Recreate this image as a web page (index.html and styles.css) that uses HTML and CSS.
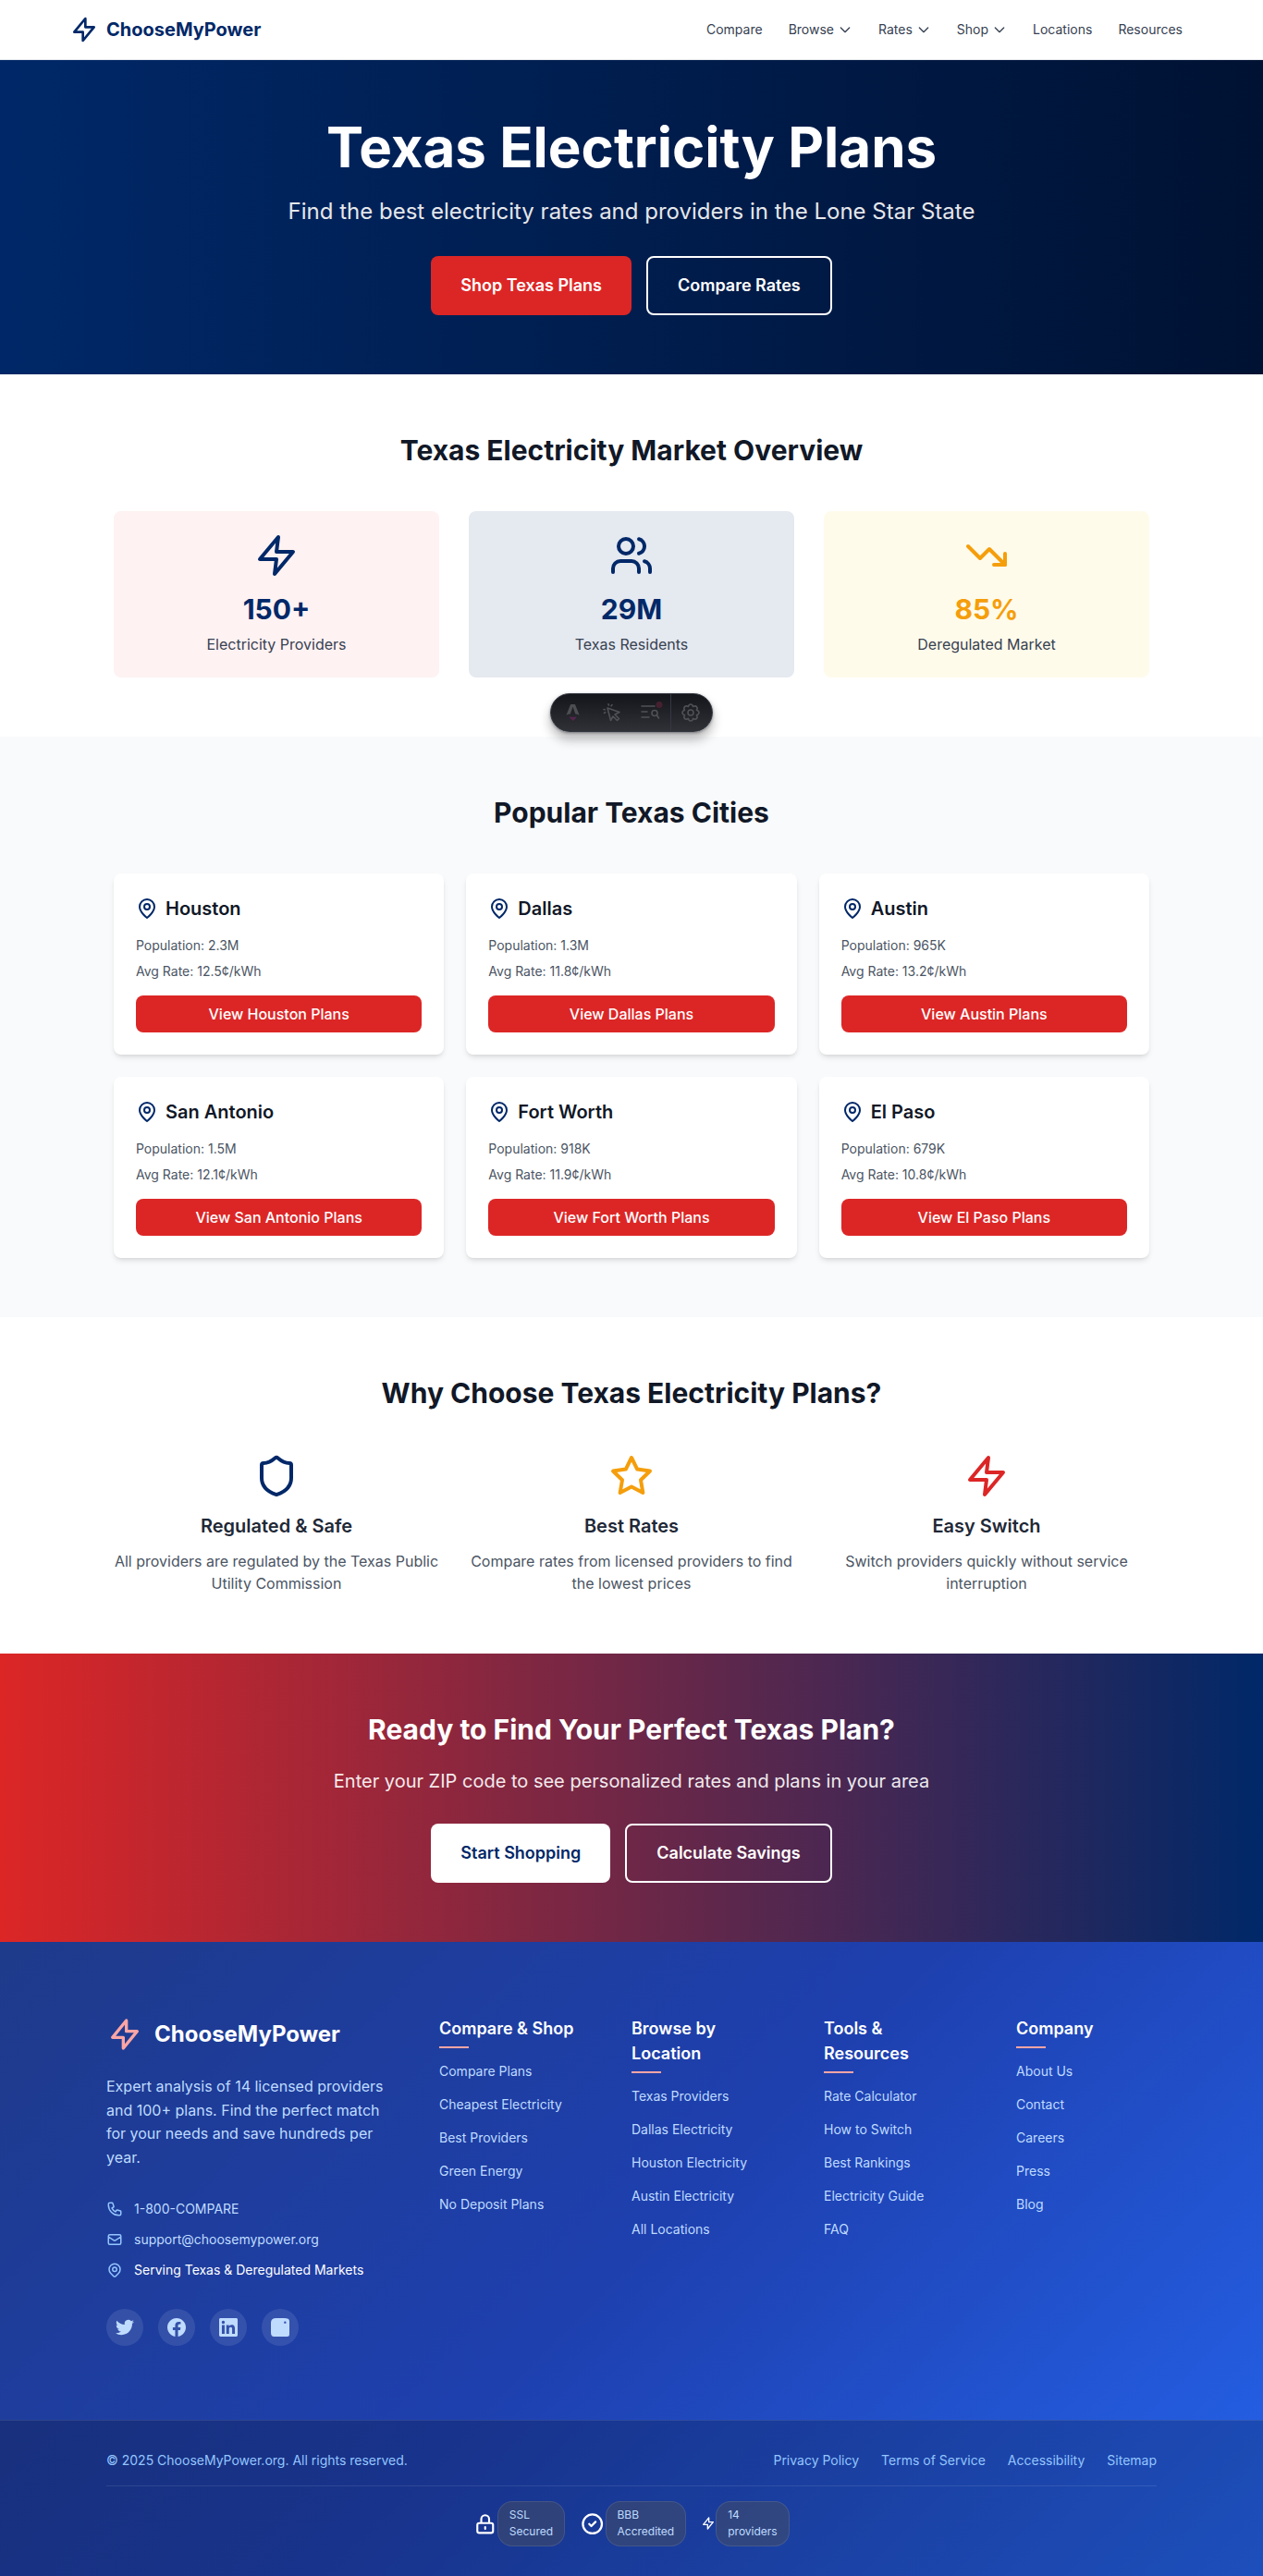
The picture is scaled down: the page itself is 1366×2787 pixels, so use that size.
FILE: index.html
```html
<!DOCTYPE html>
<html lang="en">
<head>
<meta charset="utf-8">
<title>Texas Electricity Plans | ChooseMyPower</title>
<link rel="stylesheet" href="styles.css">
</head>
<body>
<svg class="sprite" aria-hidden="true">
  <symbol id="bolt" viewBox="0 0 24 24"><path d="M13 10V3L4 14h7v7l9-11h-7z"/></symbol>
  <symbol id="zap" viewBox="0 0 24 24"><path d="M13 2L3 14h9l-1 8 10-12h-9l1-8z"/></symbol>
  <symbol id="chevron" viewBox="0 0 24 24"><path d="M19 9l-7 7-7-7"/></symbol>
  <symbol id="pin" viewBox="0 0 24 24"><path d="M17.657 16.657L13.414 20.9a1.998 1.998 0 01-2.827 0l-4.244-4.243a8 8 0 1111.314 0z"/><path d="M15 11a3 3 0 11-6 0 3 3 0 016 0z"/></symbol>
  <symbol id="map-pin" viewBox="0 0 24 24"><path d="M20 10c0 6-8 12-8 12s-8-6-8-12a8 8 0 0 1 16 0Z"/><circle cx="12" cy="10" r="3"/></symbol>
</svg>

<header class="header">
  <div class="header-inner">
    <a class="logo"><svg class="icon icon-32"><use href="#bolt"/></svg><span>ChooseMyPower</span></a>
    <nav class="nav">
      <a class="nav-link">Compare</a>
      <a class="nav-link">Browse<svg class="icon icon-16"><use href="#chevron"/></svg></a>
      <a class="nav-link">Rates<svg class="icon icon-16"><use href="#chevron"/></svg></a>
      <a class="nav-link">Shop<svg class="icon icon-16"><use href="#chevron"/></svg></a>
      <a class="nav-link">Locations</a>
      <a class="nav-link">Resources</a>
    </nav>
  </div>
</header>

<main>
  <section class="hero">
    <h1 class="hero-title">Texas Electricity Plans</h1>
    <p class="hero-text">Find the best electricity rates and providers in the Lone Star State</p>
    <div class="actions">
      <a class="button button-red">Shop Texas Plans</a>
      <a class="button button-outline">Compare Rates</a>
    </div>
  </section>

  <section class="section">
    <h2 class="heading">Texas Electricity Market Overview</h2>
    <div class="grid stats">
      <div class="stat stat-red">
        <svg class="icon icon-48"><use href="#zap"/></svg>
        <div class="stat-value">150+</div>
        <div class="stat-label">Electricity Providers</div>
      </div>
      <div class="stat stat-blue">
        <svg class="icon icon-48" viewBox="0 0 24 24"><path d="M16 21v-2a4 4 0 0 0-4-4H6a4 4 0 0 0-4 4v2"/><circle cx="9" cy="7" r="4"/><path d="M22 21v-2a4 4 0 0 0-3-3.87"/><path d="M16 3.13a4 4 0 0 1 0 7.75"/></svg>
        <div class="stat-value">29M</div>
        <div class="stat-label">Texas Residents</div>
      </div>
      <div class="stat stat-yellow">
        <svg class="icon icon-48" viewBox="0 0 24 24"><path d="M22 17l-8.500-8.500-5 5L2 7"/><path d="M16 17h6v-6"/></svg>
        <div class="stat-value">85%</div>
        <div class="stat-label">Deregulated Market</div>
      </div>
    </div>
  </section>

  <section class="section section-gray">
    <h2 class="heading">Popular Texas Cities</h2>
    <div class="grid cities">
      <article class="city">
        <h3 class="city-name"><svg class="icon icon-24"><use href="#map-pin"/></svg>Houston</h3>
        <p class="city-fact">Population: 2.3M</p><p class="city-fact">Avg Rate: 12.5¢/kWh</p>
        <a class="city-button">View Houston Plans</a>
      </article>
      <article class="city">
        <h3 class="city-name"><svg class="icon icon-24"><use href="#map-pin"/></svg>Dallas</h3>
        <p class="city-fact">Population: 1.3M</p><p class="city-fact">Avg Rate: 11.8¢/kWh</p>
        <a class="city-button">View Dallas Plans</a>
      </article>
      <article class="city">
        <h3 class="city-name"><svg class="icon icon-24"><use href="#map-pin"/></svg>Austin</h3>
        <p class="city-fact">Population: 965K</p><p class="city-fact">Avg Rate: 13.2¢/kWh</p>
        <a class="city-button">View Austin Plans</a>
      </article>
      <article class="city">
        <h3 class="city-name"><svg class="icon icon-24"><use href="#map-pin"/></svg>San Antonio</h3>
        <p class="city-fact">Population: 1.5M</p><p class="city-fact">Avg Rate: 12.1¢/kWh</p>
        <a class="city-button">View San Antonio Plans</a>
      </article>
      <article class="city">
        <h3 class="city-name"><svg class="icon icon-24"><use href="#map-pin"/></svg>Fort Worth</h3>
        <p class="city-fact">Population: 918K</p><p class="city-fact">Avg Rate: 11.9¢/kWh</p>
        <a class="city-button">View Fort Worth Plans</a>
      </article>
      <article class="city">
        <h3 class="city-name"><svg class="icon icon-24"><use href="#map-pin"/></svg>El Paso</h3>
        <p class="city-fact">Population: 679K</p><p class="city-fact">Avg Rate: 10.8¢/kWh</p>
        <a class="city-button">View El Paso Plans</a>
      </article>
    </div>
  </section>

  <section class="section">
    <h2 class="heading">Why Choose Texas Electricity Plans?</h2>
    <div class="grid reasons">
      <div class="reason reason-navy">
        <svg class="icon icon-48" viewBox="0 0 24 24"><path d="M20 13c0 5-3.500 7.500-7.660 8.950a1 1 0 0 1-.67-.01C7.500 20.500 4 18 4 13V6a1 1 0 0 1 1-1c2 0 4.500-1.200 6.240-2.720a1.170 1.170 0 0 1 1.520 0C14.510 3.810 17 5 19 5a1 1 0 0 1 1 1z"/></svg>
        <h3 class="reason-title">Regulated &amp; Safe</h3>
        <p class="reason-text">All providers are regulated by the Texas Public Utility Commission</p>
      </div>
      <div class="reason reason-gold">
        <svg class="icon icon-48" viewBox="0 0 24 24"><path d="M12 2l3.090 6.260L22 9.270l-5 4.870 1.180 6.880L12 17.770l-6.180 3.250L7 14.140 2 9.270l6.910-1.010L12 2z"/></svg>
        <h3 class="reason-title">Best Rates</h3>
        <p class="reason-text">Compare rates from licensed providers to find the lowest prices</p>
      </div>
      <div class="reason reason-red">
        <svg class="icon icon-48"><use href="#zap"/></svg>
        <h3 class="reason-title">Easy Switch</h3>
        <p class="reason-text">Switch providers quickly without service interruption</p>
      </div>
    </div>
  </section>

  <section class="cta">
    <h2 class="cta-title">Ready to Find Your Perfect Texas Plan?</h2>
    <p class="cta-text">Enter your ZIP code to see personalized rates and plans in your area</p>
    <div class="actions">
      <a class="button button-white">Start Shopping</a>
      <a class="button button-outline">Calculate Savings</a>
    </div>
  </section>
</main>

<footer class="footer">
  <div class="footer-main">
    <div>
      <div class="footer-brand"><svg class="icon icon-40"><use href="#bolt"/></svg><span>ChooseMyPower</span></div>
      <p class="footer-about">Expert analysis of 14 licensed providers and 100+ plans. Find the perfect match for your needs and save hundreds per year.</p>
      <ul class="contacts">
        <li><svg class="icon icon-18" viewBox="0 0 24 24"><path d="M3 5a2 2 0 012-2h3.280a1 1 0 01.948.684l1.498 4.493a1 1 0 01-.502 1.210l-2.257 1.130a11.042 11.042 0 005.516 5.516l1.130-2.257a1 1 0 011.210-.502l4.493 1.498a1 1 0 01.684.949V19a2 2 0 01-2 2h-1C9.716 21 3 14.284 3 6V5z"/></svg>1-800-COMPARE</li>
        <li><svg class="icon icon-18" viewBox="0 0 24 24"><path d="M3 8l7.890 5.260a2 2 0 002.220 0L21 8M5 19h14a2 2 0 002-2V7a2 2 0 00-2-2H5a2 2 0 00-2 2v10a2 2 0 002 2z"/></svg>support@choosemypower.org</li>
        <li class="contact-area"><svg class="icon icon-18"><use href="#pin"/></svg>Serving Texas &amp; Deregulated Markets</li>
      </ul>
      <div class="socials">
        <a class="social"><svg viewBox="0 0 24 24"><path d="M23.953 4.570a10 10 0 01-2.825.775 4.958 4.958 0 002.163-2.723c-.951.555-2.005.959-3.127 1.184a4.920 4.920 0 00-8.384 4.482C7.690 8.095 4.067 6.130 1.640 3.162a4.822 4.822 0 00-.666 2.475c0 1.710.87 3.213 2.188 4.096a4.904 4.904 0 01-2.228-.616v.060a4.923 4.923 0 003.946 4.827 4.996 4.996 0 01-2.212.085 4.936 4.936 0 004.604 3.417 9.867 9.867 0 01-6.102 2.105c-.39 0-.779-.023-1.170-.067a13.995 13.995 0 007.557 2.209c9.053 0 13.998-7.496 13.998-13.985 0-.21 0-.42-.015-.63A9.935 9.935 0 0024 4.590z"/></svg></a>
        <a class="social"><svg viewBox="0 0 24 24"><path d="M24 12.073c0-6.627-5.373-12-12-12s-12 5.373-12 12c0 5.990 4.388 10.954 10.125 11.854v-8.385H7.078v-3.470h3.047V9.430c0-3.007 1.792-4.669 4.533-4.669 1.312 0 2.686.235 2.686.235v2.953H15.830c-1.491 0-1.956.925-1.956 1.874v2.250h3.328l-.532 3.470h-2.796v8.385C19.612 23.027 24 18.062 24 12.073z"/></svg></a>
        <a class="social"><svg viewBox="0 0 24 24"><path d="M20.447 20.452h-3.554v-5.569c0-1.328-.027-3.037-1.852-3.037-1.853 0-2.136 1.445-2.136 2.939v5.667H9.351V9h3.414v1.561h.046c.477-.9 1.637-1.850 3.370-1.850 3.601 0 4.267 2.370 4.267 5.455v6.286zM5.337 7.433a2.062 2.062 0 01-2.063-2.065 2.064 2.064 0 112.063 2.065zm1.782 13.019H3.555V9h3.564v11.452zM22.225 0H1.771C.792 0 0 .774 0 1.729v20.542C0 23.227.792 24 1.771 24h20.451C23.200 24 24 23.227 24 22.271V1.729C24 .774 23.200 0 22.222 0h.003z"/></svg></a>
        <a class="social"><svg viewBox="0 0 24 24"><path fill-rule="evenodd" d="M7 0h10q7 0 7 4v17q0 3-3 3H4q-4 0-4-5V6q0-6 7-6zm11.400 4.150a1.440 1.440 0 100 2.880 1.440 1.440 0 000-2.880z"/></svg></a>
      </div>
    </div>
    <div>
      <h4 class="footer-title">Compare &amp; Shop</h4>
      <ul class="footer-links"><li>Compare Plans</li><li>Cheapest Electricity</li><li>Best Providers</li><li>Green Energy</li><li>No Deposit Plans</li></ul>
    </div>
    <div>
      <h4 class="footer-title">Browse by Location</h4>
      <ul class="footer-links"><li>Texas Providers</li><li>Dallas Electricity</li><li>Houston Electricity</li><li>Austin Electricity</li><li>All Locations</li></ul>
    </div>
    <div>
      <h4 class="footer-title">Tools &amp; Resources</h4>
      <ul class="footer-links"><li>Rate Calculator</li><li>How to Switch</li><li>Best Rankings</li><li>Electricity Guide</li><li>FAQ</li></ul>
    </div>
    <div>
      <h4 class="footer-title">Company</h4>
      <ul class="footer-links"><li>About Us</li><li>Contact</li><li>Careers</li><li>Press</li><li>Blog</li></ul>
    </div>
  </div>
  <div class="footer-bottom">
    <div class="footer-bottom-inner">
      <div class="legal">
        <span>© 2025 ChooseMyPower.org. All rights reserved.</span>
        <div class="legal-links"><a>Privacy Policy</a><a>Terms of Service</a><a>Accessibility</a><a>Sitemap</a></div>
      </div>
      <div class="trust">
        <div class="trust-item"><svg class="icon trust-lock" viewBox="0 0 24 24"><path d="M12 15v2m-6 4h12a2 2 0 002-2v-6a2 2 0 00-2-2H6a2 2 0 00-2 2v6a2 2 0 002 2zm10-10V7a4 4 0 00-8 0v4h8z"/></svg><span class="badge">SSL<br>Secured</span></div>
        <div class="trust-item"><svg class="icon trust-check" viewBox="0 0 24 24"><path d="M9 12l2 2 4-4m6 2a9 9 0 11-18 0 9 9 0 0118 0z"/></svg><span class="badge">BBB<br>Accredited</span></div>
        <div class="trust-item"><svg class="icon icon-16"><use href="#bolt"/></svg><span class="badge">14<br>providers</span></div>
      </div>
    </div>
  </div>
</footer>

<div class="toolbar">
  <span class="tool"><svg width="16" height="20" viewBox="0 0 18 20"><path fill="#4d4e52" d="M5.800 0h5.400l5.300 13q-2.600-1.100-4.900-1.200L8.500 3 5.400 11.800Q3 11.900.5 13z"/><path fill="#56264f" d="M4 14.800q4.500 1.200 9 0-.2 2.500-3 4l-1.500 1.500q-.3-1.800-1.800-2.200Q4.500 17 4 14.800z"/></svg></span>
  <span class="tool"><svg class="icon" width="20" height="20" viewBox="0 0 20 20"><path d="M5 5l13 4.500-5 2.500 4.500 4.500-2 2L11 14l-2.500 4.500zM6 .8l.4 1.200M10 1.500l-1 1.200M1 6.500l1.200.3M1.500 10.500l1.200-.8"/></svg></span>
  <span class="tool"><svg class="icon" width="24" height="20" viewBox="0 0 24 20"><path d="M2 3h14M2 9h6M2 15h8"/><circle cx="16" cy="10.500" r="3"/><path d="M18.500 13l2 3"/><circle class="tool-dot" cx="21" cy="1.500" r="3.500"/></svg></span>
  <span class="tool tool-last"><svg class="icon" width="20" height="20" viewBox="0 0 20 20"><circle cx="10" cy="10" r="3"/><path d="M8 2q2-2 4 0l.5 1.500 2-.8q2.500.3 2.700 2.900l-.8 1.600L18 8q2 2 0 4l-1.600.7.8 1.700q-.2 2.500-2.700 2.800l-2-.8L12 18q-2 2-4 0l-.6-1.600-2 .8q-2.400-.3-2.700-2.800l.8-1.700L2 12q-2-2 0-4l1.500-.8-.8-1.600q.3-2.600 2.700-2.900l2 .8z"/></svg></span>
</div>
</body>
</html>
```
FILE: styles.css
```css
*, *::before, *::after { box-sizing: border-box; margin: 0; padding: 0; }
body { position: relative; font-family: Inter, "Liberation Sans", sans-serif; font-size: 16px; line-height: 24px; color: #111827; background: #fff; }
ul { list-style: none; }
.sprite { display: none; }

.icon { flex: none; fill: none; stroke: currentColor; stroke-width: 2; stroke-linecap: round; stroke-linejoin: round; overflow: visible; }
.icon-16 { width: 16px; height: 16px; }
.icon-18 { width: 18px; height: 18px; }
.icon-24 { width: 24px; height: 24px; }
.icon-32 { width: 32px; height: 32px; }
.icon-40 { width: 40px; height: 40px; }
.icon-48 { width: 48px; height: 48px; }

.header { background: #fff; border-bottom: 1px solid #e5e7eb; }
.header-inner { display: flex; justify-content: space-between; align-items: center; max-width: 1280px; height: 64px; margin: 0 auto; padding: 0 32px; }
.logo { display: flex; align-items: center; gap: 8px; color: #002868; font-size: 20px; font-weight: 700; line-height: 28px; }
.nav { display: flex; gap: 4px; }
.nav-link { display: flex; align-items: center; gap: 4px; padding: 8px 12px; color: #374151; font-size: 14px; line-height: 20px; }

.hero { padding: 64px 16px; background: linear-gradient(90deg, #002868, #001233); color: #fff; text-align: center; }
.hero-title { margin-bottom: 24px; font-size: 60px; font-weight: 700; line-height: 60px; }
.hero-text { margin-bottom: 32px; font-size: 24px; line-height: 32px; color: #e5e7eb; }
.actions { display: flex; justify-content: center; gap: 16px; }
.button { display: flex; align-items: center; height: 64px; padding: 0 32px; border-radius: 8px; font-size: 18px; font-weight: 600; line-height: 28px; }
.button-red { background: #dc2626; color: #fff; }
.button-white { background: #fff; color: #002868; }
.button-outline { border: 2px solid #fff; color: #fff; }

.section { padding: 64px 0; }
.section-gray { background: #f9fafb; }
.heading { margin-bottom: 48px; font-size: 30px; font-weight: 700; line-height: 36px; text-align: center; }
.grid { display: grid; grid-template-columns: repeat(3, 1fr); gap: 32px; width: 1120px; margin: 0 auto; }
.stat { display: flex; flex-direction: column; align-items: center; padding: 24px; border-radius: 8px; color: #002868; }
.stat-red { background: #fef2f2; }
.stat-blue { background: #e5e9f0; }
.stat-yellow { background: #fffbeb; color: #f59e0b; }
.stat-value { margin: 16px 0 8px; font-size: 30px; font-weight: 700; line-height: 36px; }
.stat-label { color: #374151; }

.cities { gap: 24px; }
.city { padding: 24px; border-radius: 8px; background: #fff; box-shadow: 0 4px 6px -1px rgba(0, 0, 0, .1), 0 2px 4px -2px rgba(0, 0, 0, .1); }
.city-name { display: flex; align-items: center; gap: 8px; margin-bottom: 16px; font-size: 20px; font-weight: 600; line-height: 28px; }
.city-name .icon { color: #002868; }
.city-fact { margin-bottom: 8px; color: #4b5563; font-size: 14px; line-height: 20px; }
.city-button { display: block; margin-top: 16px; padding: 8px 16px; border-radius: 8px; background: #dc2626; color: #fff; font-weight: 500; text-align: center; }

.reason { display: flex; flex-direction: column; align-items: center; text-align: center; }
.reason-navy { color: #002868; }
.reason-gold { color: #f59e0b; }
.reason-red { color: #dc2626; }
.reason-title { margin: 16px 0 12px; color: #1f2937; font-size: 20px; font-weight: 600; line-height: 28px; }
.reason-text { color: #4b5563; }

.cta { padding: 64px 16px; background: linear-gradient(90deg, #dc2626, #002868); color: #fff; text-align: center; }
.cta-title { margin-bottom: 24px; font-size: 30px; font-weight: 700; line-height: 36px; }
.cta-text { margin-bottom: 32px; font-size: 20px; line-height: 28px; opacity: .9; }

.footer { background: linear-gradient(135deg, #1e3a8a 0%, #1e40af 50%, #2563eb 100%); color: #fff; }
.footer-main { display: grid; grid-template-columns: 2fr repeat(4, 1fr); gap: 56px; max-width: 1200px; margin: 0 auto; padding: 80px 32px; }
.footer-brand { display: flex; align-items: center; gap: 12px; margin-bottom: 24px; font-size: 24px; font-weight: 700; }
.footer-brand .icon { color: #fca5a5; }
.footer-about { margin-bottom: 32px; color: #bfdbfe; line-height: 25.6px; }
.contacts { display: grid; gap: 12px; margin-bottom: 32px; color: #bfdbfe; font-size: 14px; line-height: 21px; }
.contacts li { display: flex; align-items: center; gap: 12px; }
.contacts .icon { color: #93c5fd; }
.contacts .contact-area { color: #fff; }
.socials { display: flex; gap: 16px; }
.social { display: flex; align-items: center; justify-content: center; width: 40px; height: 40px; border-radius: 50%; background: rgba(255, 255, 255, .1); }
.social svg { width: 20px; height: 20px; fill: #bfdbfe; }
.footer-title { position: relative; margin-bottom: 21px; font-size: 18px; font-weight: 600; line-height: 27px; }
.footer-title::after { content: ""; position: absolute; left: 0; bottom: -8px; width: 32px; height: 2px; background: #fca5a5; }
.footer-links { display: grid; gap: 12px; color: #bfdbfe; font-size: 14px; }

.footer-bottom { padding: 32px 0; border-top: 1px solid rgba(255, 255, 255, .1); background: rgba(0, 0, 0, .2); color: #93c5fd; font-size: 14px; line-height: 21px; }
.footer-bottom-inner { max-width: 1200px; margin: 0 auto; padding: 0 32px; }
.legal { display: flex; justify-content: space-between; padding-bottom: 16.6px; border-bottom: 1px solid rgba(255, 255, 255, .1); }
.legal-links { display: flex; gap: 24px; }
.trust { display: flex; justify-content: center; gap: 16px; padding-top: 16px; color: #fff; }
.trust-item { display: flex; align-items: center; }
.trust-lock { width: 25.5px; height: 25.5px; }
.trust-check { width: 27.4px; height: 27.4px; }
.badge { padding: 5.5px 12px; border: 1px solid rgba(255, 255, 255, .1); border-radius: 16px; background: rgba(82, 82, 82, .4); color: #bfdbfe; font-size: 12px; line-height: 18px; }

.toolbar { position: absolute; left: 595px; top: 750px; display: flex; width: 176px; height: 42px; padding: 0 2px 0 3px; border: 1px solid #343841; border-radius: 21px; background: linear-gradient(180deg, #13151a, #2f3136); color: #505156; box-shadow: 0 8px 12px rgba(19, 21, 26, .3), 0 1px 3px rgba(19, 21, 26, .4); }
.tool { display: flex; align-items: center; justify-content: center; width: 42px; }
.tool .icon { stroke-width: 1.6; }
.tool-last { border-left: 1px solid #343841; }
.icon .tool-dot { fill: #47202f; stroke: none; }
```
